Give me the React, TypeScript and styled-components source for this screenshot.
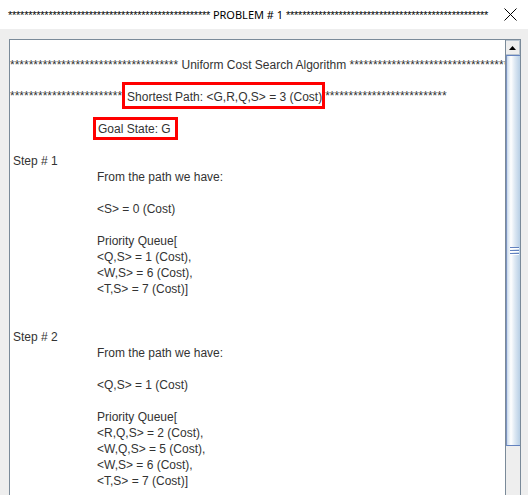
import React from "react";
import styled, { createGlobalStyle } from "styled-components";

const GlobalStyle = createGlobalStyle`
  html, body { margin: 0; padding: 0; background: #eeeeee; }
  body { width: 528px; height: 495px; overflow: hidden; }
`;

const Window = styled.div`
  width: 528px;
  height: 495px;
  display: flex;
  flex-direction: column;
  overflow: hidden;
  background: #eeeeee;
`;

const TitleBar = styled.div`
  flex: none;
  height: 29px;
  background: #ffffff;
  display: grid;
  grid-template-columns: 496px 32px;
  align-items: center;
`;

const Title = styled.div`
  min-width: 0;
  text-align: center;
  white-space: nowrap;
  overflow: hidden;
  font-family: "Noto Sans", sans-serif;
  font-size: 11px;
  color: #000000;
`;

const TitleStars = styled.span`
  font-family: "Liberation Sans", Arial, sans-serif;
  font-size: 11px;
  letter-spacing: -0.24px;
`;

const CloseButton = styled.div`
  display: flex;
  align-items: center;
  padding-left: 8px;
`;

const Body = styled.div`
  flex: 1;
  padding: 10px 7px 0 9px;
  overflow: hidden;
`;

const ScrollPane = styled.div`
  display: flex;
  height: 470px;
  border: 1px solid #7a8a99;
  background: #ffffff;
`;

const Viewport = styled.div`
  flex: 1;
  min-width: 0;
  overflow: hidden;
  background: #ffffff;
`;

const Doc = styled.div`
  padding-top: 17px;
  font-family: "Liberation Sans", Arial, sans-serif;
  font-size: 12px;
  line-height: 16px;
  color: #333333;
  white-space: nowrap;
`;

const Line = styled.div<{ $indent?: number }>`
  height: 16px;
  padding-left: ${(p) => p.$indent ?? 0}px;
`;

const ClippedLine = styled.div`
  height: 16px;
  overflow: hidden;
`;

const BoxRow = styled.div<{ $top: number }>`
  display: flex;
  align-items: center;
  margin-top: ${(p) => p.$top}px;
`;

const Highlight = styled.span<{ $pad: string; $left?: number }>`
  display: inline-block;
  border: 3px solid #ff0000;
  padding: ${(p) => p.$pad};
  margin-left: ${(p) => p.$left ?? 0}px;
  line-height: 16px;
`;

const StepBlock = styled.div<{ $top: number }>`
  margin-top: ${(p) => p.$top}px;
`;

const ScrollBar = styled.div`
  flex: none;
  width: 15px;
  box-sizing: border-box;
  border-left: 1px solid #7a8a99;
  display: flex;
  flex-direction: column;
  background: #eeeeee;
`;

const ArrowButton = styled.div`
  flex: none;
  height: 15px;
  box-sizing: border-box;
  border: 1px solid #b8c4d0;
  border-left: none;
  background: #eeeeee;
  display: flex;
  align-items: center;
  justify-content: center;
`;

const Track = styled.div`
  flex: 1;
  display: flex;
  flex-direction: column;
`;

const Thumb = styled.div`
  flex: none;
  height: 391px;
  box-sizing: border-box;
  border: 1px solid #6382bf;
  border-left-color: #7d93c0;
  border-right: none;
  background: linear-gradient(
    to right,
    #c4d6ea 0%,
    #dde8f3 10%,
    #ffffff 30%,
    #dde8f3 60%,
    #b8cfe5 100%
  );
  display: flex;
  align-items: center;
  justify-content: center;
`;

const Grip = styled.div`
  width: 9px;
  display: flex;
  flex-direction: column;
  gap: 1px;
  margin-left: 1px;
`;

const GripLine = styled.div`
  height: 2px;
  box-sizing: border-box;
  border-top: 1px solid #6382bf;
  border-bottom: 1px solid #ffffff;
`;

const stars = (n: number) => "*".repeat(n);

type Step = { n: number; visited: string; queue: string[] };

const steps: Step[] = [
  {
    n: 1,
    visited: "<S> = 0 (Cost)",
    queue: ["<Q,S> = 1 (Cost),", "<W,S> = 6 (Cost),", "<T,S> = 7 (Cost)]"],
  },
  {
    n: 2,
    visited: "<Q,S> = 1 (Cost)",
    queue: [
      "<R,Q,S> = 2 (Cost),",
      "<W,Q,S> = 5 (Cost),",
      "<W,S> = 6 (Cost),",
      "<T,S> = 7 (Cost)]",
    ],
  },
];

const IND = 87;

function StepView({ step, top }: { step: Step; top: number }) {
  return (
    <StepBlock $top={top}>
      <Line $indent={3}>Step # {step.n}</Line>
      <Line $indent={IND}>From the path we have:</Line>
      <Line />
      <Line $indent={IND}>{step.visited}</Line>
      <Line />
      <Line $indent={IND}>Priority Queue[</Line>
      {step.queue.map((q) => (
        <Line key={q} $indent={IND}>
          {q}
        </Line>
      ))}
    </StepBlock>
  );
}

export default function App() {
  return (
    <>
      <GlobalStyle />
      <Window>
        <TitleBar>
          <Title>
            <TitleStars>{stars(50)}</TitleStars> PROBLEM # 1{" "}
            <TitleStars>{stars(50)}</TitleStars>
          </Title>
          <CloseButton>
            <svg width="13" height="13" viewBox="0 0 13 13">
              <path d="M0.5 0.5 L12.5 12.5 M12.5 0.5 L0.5 12.5" stroke="#000" strokeWidth="1" fill="none" />
            </svg>
          </CloseButton>
        </TitleBar>
        <Body>
          <ScrollPane>
            <Viewport>
              <Doc>
                <ClippedLine>
                  {stars(36)} Uniform Cost Search Algorithm {stars(40)}
                </ClippedLine>
                <BoxRow $top={9}>
                  <span>{stars(24)}</span>
                  <Highlight $pad="4px 0 1px 2px">Shortest Path: &lt;G,R,Q,S&gt; = 3 (Cost)</Highlight>
                  <span>{stars(26)}</span>
                </BoxRow>
                <BoxRow $top={8}>
                  <Highlight $pad="1px 4px 0 2px" $left={83}>
                    Goal State: G
                  </Highlight>
                </BoxRow>
                <StepView step={steps[0]} top={13} />
                <Line />
                <Line />
                <StepView step={steps[1]} top={0} />
              </Doc>
            </Viewport>
            <ScrollBar>
              <ArrowButton>
                <svg width="7" height="4" viewBox="0 0 7 4">
                  <path d="M0 4 L3.5 0 L7 4 Z" fill="#000" />
                </svg>
              </ArrowButton>
              <Track>
                <Thumb>
                  <Grip>
                    <GripLine />
                    <GripLine />
                    <GripLine />
                  </Grip>
                </Thumb>
              </Track>
            </ScrollBar>
          </ScrollPane>
        </Body>
      </Window>
    </>
  );
}
